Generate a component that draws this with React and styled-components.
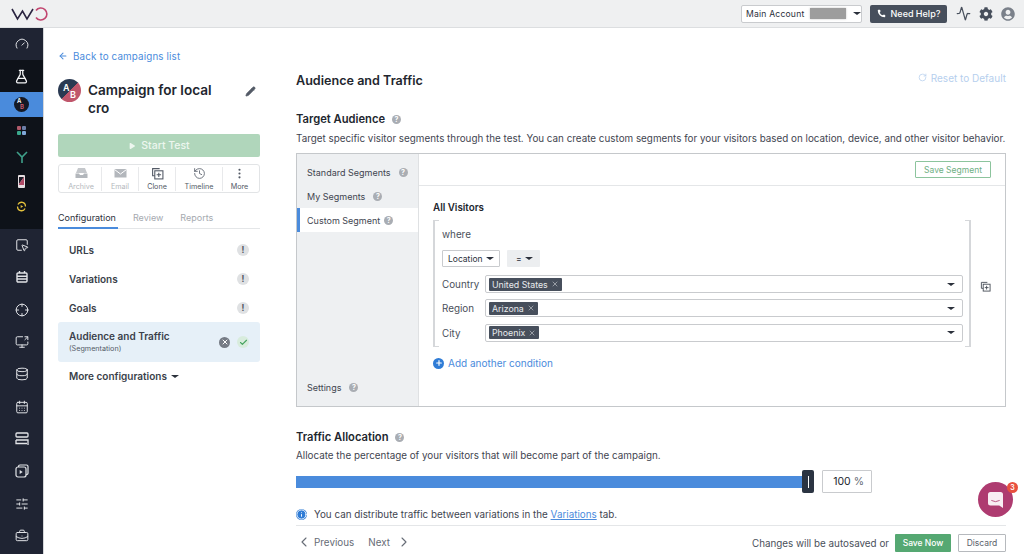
import React from "react";
import styled, { createGlobalStyle } from "styled-components";
import {
  ArrowLeft,
  BriefcaseBusiness,
  Check,
  ChevronLeft,
  ChevronRight,
  Crosshair,
  Database,
  Gauge,
  FlaskConical,
  History,
  EllipsisVertical,
  Activity,
  SlidersHorizontal,
  SquareMousePointer,
  CalendarDays,
  ScreenShare,
  RotateCw,
  Phone,
  Pencil,
  Play,
  Plus,
  X,
  Info,
} from "lucide-react";
import { FaCog, FaUserCircle } from "react-icons/fa";

const GlobalStyle = createGlobalStyle`
  html, body {
    margin: 0;
    padding: 0;
    height: 100%;
    overflow: hidden;
    background: #fff;
    font-family: Inter, "Liberation Sans", sans-serif;
    color: #2b303b;
  }
  * { box-sizing: border-box; }
`;

const Page = styled.div`
  width: 1024px;
  height: 554px;
  display: flex;
  flex-direction: column;
  overflow: hidden;
  position: relative;
`;

const TopBar = styled.header`
  height: 28px;
  flex-shrink: 0;
  display: flex;
  align-items: center;
  justify-content: space-between;
  padding: 0 9px 0 11px;
  background: #eff0f1;
  border-bottom: 1px solid #dcdee0;
`;

const TopRight = styled.div`
  display: flex;
  align-items: center;
`;

const AccountSelect = styled.div`
  width: 121px;
  height: 18px;
  display: flex;
  align-items: center;
  padding: 0 3px 0 4px;
  background: #fff;
  border: 1px solid #c9cbce;
  border-radius: 2px;
  font-size: 8.6px;
  letter-spacing: 0.2px;
  white-space: nowrap;
`;

const Blurred = styled.span`
  width: 36px;
  height: 11px;
  flex-shrink: 0;
  margin: 0 7px 0 6px;
  background: #9d9d9d;
  box-shadow: 0 0 2px #c4c4c4;
`;

const Caret = styled.span`
  display: inline-block;
  width: 0;
  height: 0;
  flex-shrink: 0;
  border-left: ${(p) => p.$size ?? 4}px solid transparent;
  border-right: ${(p) => p.$size ?? 4}px solid transparent;
  border-top: ${(p) => (p.$size ?? 4) - 1}px solid ${(p) => p.$color ?? "#2b303b"};
`;

const HelpButton = styled.div`
  width: 77px;
  height: 18px;
  margin-left: 8px;
  display: flex;
  align-items: center;
  justify-content: center;
  gap: 5px;
  background: #474f5c;
  border-radius: 2px;
  color: #fff;
  font-size: 9px;
  font-weight: 500;
`;

const TopIcons = styled.div`
  display: flex;
  align-items: center;
  gap: 8px;
  margin-left: 9px;
  color: #474f5c;
`;

const Body = styled.div`
  flex: 1;
  display: flex;
  min-height: 0;
`;

const SideNav = styled.nav`
  width: 44px;
  flex-shrink: 0;
  display: flex;
  flex-direction: column;
  background: #1f2433;
  border-right: 1px solid #d5d7da;
`;

const DarkGroup = styled.div`
  background: #0e1219;
  padding-bottom: 10px;
`;

const NavItem = styled.div`
  height: ${(p) => p.$h}px;
  display: flex;
  align-items: center;
  justify-content: center;
  color: ${(p) => p.$color ?? "#e2e4e8"};
  background: ${(p) => (p.$active ? "#4a8bdc" : "transparent")};
`;

const ABSmall = styled.div`
  width: 15px;
  height: 15px;
  border-radius: 50%;
  background: #141925;
  color: #fff;
  font-size: 6px;
  font-weight: 600;
  line-height: 6px;
  padding: 1px 0 0 3px;
  & span { color: #d0606f; margin-left: 3px; }
`;

const DotGrid = styled.div`
  display: grid;
  grid-template-columns: 4px 4px;
  gap: 1px;
`;

const Dot = styled.span`
  width: 4px;
  height: 4px;
  border-radius: 1px;
  background: ${(p) => p.$c};
`;

const LeftPanel = styled.aside`
  width: 252px;
  flex-shrink: 0;
  padding: 21px 36px 0 14px;
`;

const BackLink = styled.div`
  display: flex;
  align-items: center;
  gap: 5px;
  height: 14px;
  color: #4a8bdc;
  font-size: 9.8px;
  letter-spacing: 0.15px;
`;

const TitleRow = styled.div`
  display: flex;
  align-items: flex-start;
  margin-top: 15px;
  height: 44px;
`;

const Avatar = styled.div`
  width: 23px;
  height: 23px;
  margin-top: 1px;
  flex-shrink: 0;
  border-radius: 50%;
  position: relative;
  background: linear-gradient(135deg, #2a3a52 50%, #c0566b 50%);
  color: #fff;
  font-size: 9px;
  font-weight: 600;
`;

const AvatarLetter = styled.span`
  position: absolute;
  left: ${(p) => p.$x}px;
  top: ${(p) => p.$y}px;
  line-height: 1;
`;

const Title = styled.h1`
  flex: 1;
  margin: 3px 0 0 7px;
  font-size: 13.6px;
  line-height: 18px;
  font-weight: 600;
  color: #22262e;
`;

const EditIcon = styled.span`
  color: #535a66;
  margin: 3px 4px 0 0;
`;

const StartButton = styled.div`
  height: 23px;
  margin-top: 12px;
  display: flex;
  align-items: center;
  justify-content: center;
  gap: 5px;
  background: #b0d6bb;
  border-radius: 2px;
  color: #edf6ef;
  font-size: 10.5px;
  font-weight: 500;
`;

const ActionCard = styled.div`
  height: 29px;
  margin-top: 7px;
  display: flex;
  align-items: center;
  padding: 0 2px;
  border: 1px solid #e2e4e6;
  border-radius: 3px;
`;

const Action = styled.div`
  width: ${(p) => p.$w}px;
  height: 24px;
  display: flex;
  flex-direction: column;
  align-items: center;
  justify-content: space-between;
  font-size: 7.2px;
  color: ${(p) => (p.$off ? "#b3b7bc" : "#535a66")};
  border-right: ${(p) => (p.$last ? "none" : "1px solid #e8e9eb")};
`;

const Tabs = styled.div`
  margin-top: 18px;
  height: 18px;
  display: flex;
  gap: 15px;
  border-bottom: 1px solid #e4e6e8;
`;

const Tab = styled.div`
  height: 18px;
  font-size: 9px;
  line-height: 14px;
  margin-right: ${(p) => (p.$active ? "0" : "2px")};
  padding-right: ${(p) => (p.$active ? "2px" : "0")};
  color: ${(p) => (p.$active ? "#2b303b" : "#a5a9af")};
  border-bottom: ${(p) => (p.$active ? "2px solid #4a8bdc" : "none")};
`;

const ConfigList = styled.div`
  margin-top: 6px;
`;

const ConfigRow = styled.div`
  height: 29px;
  display: flex;
  align-items: center;
  justify-content: space-between;
  padding: 0 11px;
  font-size: 10px;
  font-weight: 600;
  color: #3a3f4a;
`;

const Bang = styled.span`
  width: 12px;
  height: 12px;
  border-radius: 50%;
  background: #dfe1e3;
  color: #4e545e;
  font-size: 8.5px;
  font-weight: 700;
  display: flex;
  align-items: center;
  justify-content: center;
`;

const ActiveRow = styled.div`
  height: 40px;
  display: flex;
  align-items: center;
  justify-content: space-between;
  padding: 0 11px;
  background: #e6f0f8;
  border-radius: 3px;
`;

const ActiveName = styled.div`
  font-size: 10px;
  font-weight: 600;
  line-height: 13px;
  color: #3a3f4a;
`;

const ActiveSub = styled.div`
  font-size: 7.2px;
  line-height: 11px;
  font-weight: 400;
  color: #535a66;
`;

const StatusIcons = styled.div`
  display: flex;
  align-items: center;
  gap: 7px;
`;

const RemoveDot = styled.span`
  width: 11px;
  height: 11px;
  border-radius: 50%;
  background: #757b85;
  color: #fff;
  display: flex;
  align-items: center;
  justify-content: center;
`;

const OkDot = styled.span`
  width: 12px;
  height: 12px;
  border-radius: 50%;
  background: #d8ecdd;
  color: #45a35f;
  display: flex;
  align-items: center;
  justify-content: center;
`;

const MoreRow = styled.div`
  height: 28px;
  display: flex;
  align-items: center;
  gap: 4px;
  padding-left: 11px;
  font-size: 10px;
  font-weight: 600;
  color: #3a3f4a;
`;

const Main = styled.main`
  flex: 1;
  min-width: 0;
  padding: 44px 18px 0 0;
  display: flex;
  flex-direction: column;
`;

const MainHeader = styled.div`
  display: flex;
  align-items: center;
  justify-content: space-between;
  height: 17px;
  flex-shrink: 0;
`;

const MainTitle = styled.h2`
  margin: 0;
  font-size: 12.6px;
  font-weight: 600;
  color: #22262e;
`;

const ResetLink = styled.div`
  display: flex;
  align-items: center;
  gap: 4px;
  margin-top: -6px;
  font-size: 10px;
  color: #b6cfee;
`;

const SectionTitle = styled.h3`
  margin: ${(p) => p.$top}px 0 0;
  display: flex;
  align-items: center;
  gap: 7px;
  height: 14px;
  flex-shrink: 0;
  font-size: 11.2px;
  font-weight: 600;
  color: #22262e;
`;

const Hint = styled.span`
  width: 9px;
  height: 9px;
  flex-shrink: 0;
  border-radius: 50%;
  background: #a9adb3;
  color: #fff;
  font-size: 7px;
  font-weight: 700;
  display: inline-flex;
  align-items: center;
  justify-content: center;
`;

const Description = styled.p`
  margin: ${(p) => p.$top ?? 5}px 0 0;
  flex-shrink: 0;
  font-size: 9.85px;
  line-height: 14px;
  color: #3f4550;
  white-space: nowrap;
`;

const SegmentPanel = styled.section`
  height: 254px;
  margin-top: 8px;
  flex-shrink: 0;
  display: flex;
  border: 1px solid #c5c8cb;
`;

const SegmentNav = styled.div`
  width: 122px;
  flex-shrink: 0;
  display: flex;
  flex-direction: column;
  padding-top: 6px;
  background: #eef0f2;
  border-right: 1px solid #dfe1e3;
`;

const SegmentTab = styled.div`
  height: 24px;
  flex-shrink: 0;
  display: flex;
  align-items: center;
  gap: ${(p) => p.$gap ?? 8}px;
  padding-left: ${(p) => (p.$active ? 7 : 10)}px;
  font-size: 9px;
  color: #3f4550;
  background: ${(p) => (p.$active ? "#fff" : "transparent")};
  border-left: ${(p) => (p.$active ? "3px solid #4a8bdc" : "none")};
  margin-top: ${(p) => (p.$bottom ? "auto" : "0")};
  margin-bottom: ${(p) => (p.$bottom ? "7px" : "0")};
`;

const SegmentBody = styled.div`
  flex: 1;
  min-width: 0;
`;

const SegmentHeader = styled.div`
  height: 32px;
  display: flex;
  align-items: center;
  justify-content: flex-end;
  padding-right: 14px;
  border-bottom: 1px solid #e4e6e8;
`;

const SaveSegment = styled.div`
  width: 76px;
  height: 17px;
  display: flex;
  align-items: center;
  justify-content: center;
  border: 1px solid #8cc49d;
  border-radius: 1px;
  font-size: 8.5px;
  color: #6fb084;
`;

const SegmentContent = styled.div`
  padding: 15px 0 0 14px;
`;

const AllVisitors = styled.div`
  font-size: 9.8px;
  font-weight: 600;
  line-height: 14px;
  color: #22262e;
`;

const ConditionRow = styled.div`
  display: flex;
  align-items: flex-start;
  margin-top: 5px;
`;

const Condition = styled.div`
  width: 538px;
  height: 127px;
  padding: 7px 6px 0 7px;
  border: 2px solid #d5d7da;
  border-top-width: 1px;
  border-bottom-width: 1px;
  position: relative;
  border-image: linear-gradient(
      to right,
      #d5d7da 0,
      #d5d7da 5px,
      transparent 5px,
      transparent calc(100% - 5px),
      #d5d7da calc(100% - 5px)
    )
    1;
`;

const Where = styled.div`
  font-size: 9.85px;
  line-height: 13px;
  color: #4a505a;
`;

const SelectRow = styled.div`
  display: flex;
  gap: 7px;
  margin-top: 9px;
  margin-bottom: 5px;
`;

const LocationSelect = styled.div`
  width: 58px;
  height: 17px;
  display: flex;
  align-items: center;
  justify-content: space-between;
  padding: 0 5px;
  border: 1px solid #c9cbce;
  border-radius: 1px;
  font-size: 8.5px;
`;

const OperatorSelect = styled.div`
  width: 33px;
  height: 17px;
  display: flex;
  align-items: center;
  justify-content: space-between;
  padding: 0 7px 0 9px;
  background: #eceef0;
  border-radius: 1px;
  font-size: 8.5px;
`;

const FieldRow = styled.div`
  height: 24.3px;
  display: flex;
  align-items: center;
  font-size: 9.85px;
  color: #4a505a;
`;

const FieldLabel = styled.span`
  width: 43px;
  flex-shrink: 0;
`;

const Field = styled.div`
  width: 478px;
  height: 18px;
  flex-shrink: 0;
  display: flex;
  align-items: center;
  justify-content: space-between;
  padding: 0 7px 0 3px;
  border: 1px solid #c9cbce;
  border-radius: 2px;
`;

const TagChip = styled.span`
  height: 13px;
  display: flex;
  align-items: center;
  gap: 3px;
  padding: 0 3px;
  background: #474f5c;
  border-radius: 1px;
  color: #e8eaed;
  font-size: 8.8px;
`;

const CopyButton = styled.span`
  margin: 56px 0 0 9px;
  color: #4a505a;
`;

const AddCondition = styled.div`
  display: flex;
  align-items: center;
  gap: 4px;
  margin-top: 10px;
  font-size: 10px;
  color: #4a8bdc;
`;

const PlusDot = styled.span`
  width: 11px;
  height: 11px;
  border-radius: 50%;
  background: #2f7cd6;
  color: #fff;
  display: flex;
  align-items: center;
  justify-content: center;
`;

const SliderRow = styled.div`
  height: 23px;
  margin-top: 8px;
  flex-shrink: 0;
  display: flex;
  align-items: center;
`;

const SliderTrack = styled.div`
  width: 506px;
  height: 12px;
  background: #4a8bdc;
`;

const SliderHandle = styled.div`
  width: 12px;
  height: 23px;
  display: flex;
  align-items: center;
  justify-content: center;
  background: #2b3442;
  border-radius: 2px;
  &::after {
    content: "";
    width: 1px;
    height: 12px;
    background: #fff;
  }
`;

const PercentBox = styled.div`
  width: 50px;
  height: 23px;
  margin-left: 8px;
  display: flex;
  align-items: center;
  justify-content: flex-end;
  gap: 3px;
  padding-right: 7px;
  border: 1px solid #c9cbce;
  border-radius: 1px;
  font-size: 10.5px;
  color: #22262e;
  & span { color: #666c76; }
`;

const InfoRow = styled.div`
  display: flex;
  align-items: center;
  gap: 7px;
  height: 14px;
  margin-top: 14px;
  flex-shrink: 0;
  font-size: 9.85px;
  color: #3f4550;
  & a { color: #4a8bdc; text-decoration: underline; }
`;

const InfoDot = styled.span`
  width: 11px;
  height: 11px;
  border-radius: 50%;
  background: #2f7cd6;
  color: #fff;
  display: flex;
  align-items: center;
  justify-content: center;
`;

const Footer = styled.footer`
  height: 34px;
  margin-top: 4px;
  flex-shrink: 0;
  display: flex;
  align-items: center;
  justify-content: space-between;
  border-top: 1px solid #e4e6e8;
`;

const Pager = styled.div`
  display: flex;
  align-items: center;
  margin-top: -2px;
  font-size: 9.85px;
  color: #666c76;
`;

const PagerLabel = styled.span`
  margin: ${(p) => p.$m};
`;

const FooterActions = styled.div`
  display: flex;
  align-items: center;
  font-size: 9.85px;
  color: #4a505a;
`;

const SaveNow = styled.div`
  width: 56px;
  height: 18px;
  margin-left: 6px;
  display: flex;
  align-items: center;
  justify-content: center;
  background: #55a872;
  border-radius: 1px;
  color: #fff;
  font-size: 8.5px;
  font-weight: 500;
`;

const Discard = styled.div`
  width: 48px;
  height: 18px;
  margin-left: 7px;
  display: flex;
  align-items: center;
  justify-content: center;
  border: 1px solid #b6b9bd;
  border-radius: 1px;
  font-size: 8.5px;
  color: #5c626c;
`;

const ChatBubble = styled.div`
  position: absolute;
  left: 978px;
  top: 482px;
  width: 35px;
  height: 35px;
  display: flex;
  align-items: center;
  justify-content: center;
  border-radius: 50%;
  background: #ae3b70;
`;

const ChatBadge = styled.span`
  position: absolute;
  right: -5px;
  top: 0;
  width: 11px;
  height: 11px;
  display: flex;
  align-items: center;
  justify-content: center;
  border-radius: 50%;
  background: #e8503f;
  color: #fff;
  font-size: 7px;
  font-weight: 600;
`;

function VwoLogo() {
  return (
    <svg width="38" height="14" viewBox="0 0 38 14" fill="none" strokeWidth="1.6">
      <path d="M1 2 L6.5 12 L11.5 4 L16 12 L22 2" stroke="#2a2440" />
      <path d="M25 3.5 A 6 6 0 1 1 25 10.5" stroke="#c2456f" />
    </svg>
  );
}

function YIcon() {
  return (
    <svg width="12" height="12" viewBox="0 0 12 12" fill="none" stroke="#3fa08a" strokeWidth="1.6">
      <path d="M1 1 L6 6 L11 1 M6 6 V12" />
    </svg>
  );
}

function PhoneIcon() {
  return (
    <svg width="7" height="13" viewBox="0 0 7 13">
      <rect x="0" y="0" width="7" height="13" rx="1" fill="#e6dfe2" />
      <path d="M1 2 H6 L1 9 Z" fill="#1b1b26" />
      <path d="M6 2 V10 H1 V9 Z" fill="#b04a66" />
    </svg>
  );
}

function CycleIcon() {
  return (
    <svg width="11" height="11" viewBox="0 0 14 14" fill="none" stroke="#e5c23c" strokeWidth="1.6">
      <path d="M2.5 4.5 A 5 5 0 0 1 12 7 M11.5 9.5 A 5 5 0 0 1 2 7" />
      <path d="M6 5 L9 7 L6 9 Z" fill="#e5c23c" stroke="none" />
    </svg>
  );
}

function BoardIcon() {
  return (
    <svg width="14" height="14" viewBox="0 0 14 14" fill="none" stroke="#e2e4e8" strokeWidth="1.4">
      <rect x="2" y="3" width="10" height="9" rx="1" />
      <path d="M2 6.2 H12 M2 9 H12 M4.5 1 V3 M9.5 1 V3" />
    </svg>
  );
}

function StackedRowsIcon() {
  return (
    <svg width="14" height="14" viewBox="0 0 14 14" fill="none" stroke="#e2e4e8" strokeWidth="1.3">
      <rect x="1" y="1" width="12" height="4" rx="1" />
      <path d="M1 8 H13 V13 M1 8 V11.5 H12" />
    </svg>
  );
}

function LayeredPlayIcon() {
  return (
    <svg width="14" height="14" viewBox="0 0 14 14" fill="none" stroke="#e2e4e8" strokeWidth="1.2">
      <rect x="1" y="3" width="10" height="10" rx="2" />
      <path d="M3.5 3 V2.5 A 1.5 1.5 0 0 1 5 1 H11.5 A 1.5 1.5 0 0 1 13 2.5 V9 A 1.5 1.5 0 0 1 11 10.5" />
      <path d="M4.7 6 L7.7 8 L4.7 10 Z" fill="#e2e4e8" stroke="none" />
    </svg>
  );
}

function CopyPlusIcon({ size = 11 }) {
  return (
    <svg width={size} height={size} viewBox="0 0 12 12" fill="none" stroke="currentColor" strokeWidth="1">
      <path d="M8 1.5 H1.5 V8 H3.5" />
      <rect x="3.5" y="3.5" width="7.5" height="7.5" />
      <path d="M7.2 5.2 V9.3 M5.2 7.2 H9.3" />
    </svg>
  );
}

function ArchiveTrayIcon() {
  return (
    <svg width="13" height="12" viewBox="0 0 13 12">
      <path d="M3 1 H10 L12 6 H1 Z" fill="#c4c7cb" />
      <path d="M0.5 6.5 H4 L5 8 H8 L9 6.5 H12.5 V11 H0.5 Z" fill="#b3b7bc" />
    </svg>
  );
}

function EnvelopeIcon() {
  return (
    <svg width="13" height="12" viewBox="0 0 13 12">
      <rect x="0.5" y="2" width="12" height="8.5" fill="#b3b7bc" />
      <path d="M0.5 2.5 L6.5 7 L12.5 2.5" stroke="#fff" fill="none" strokeWidth="1" />
    </svg>
  );
}

function ChatGlyph() {
  return (
    <svg width="15" height="18" viewBox="0 0 18 19">
      <path d="M3 0 H15 A 3 3 0 0 1 18 3 V19 L13.5 16 H3 A 3 3 0 0 1 0 13 V3 A 3 3 0 0 1 3 0 Z" fill="#f8edf3" />
      <path d="M4 10 Q 9 13 14 10" stroke="#ae3b70" strokeWidth="1" fill="none" />
    </svg>
  );
}

const navIcon = { size: 14, strokeWidth: 1.7 };

const lowerNav = [
  SquareMousePointer,
  BoardIcon,
  Crosshair,
  ScreenShare,
  Database,
  CalendarDays,
  StackedRowsIcon,
  LayeredPlayIcon,
  SlidersHorizontal,
  BriefcaseBusiness,
];

const fields = [
  { label: "Country", tag: "United States" },
  { label: "Region", tag: "Arizona" },
  { label: "City", tag: "Phoenix" },
];

const App = () => {
  return (
    <Page>
      <GlobalStyle />
      <TopBar>
        <VwoLogo />
        <TopRight>
          <AccountSelect>
            Main Account
            <Blurred />
            <Caret />
          </AccountSelect>
          <HelpButton>
            <Phone size={9} fill="#fff" strokeWidth={0} />
            Need Help?
          </HelpButton>
          <TopIcons>
            <Activity size={15} strokeWidth={2} />
            <FaCog size={14} />
            <FaUserCircle size={14} color="#7a808a" />
          </TopIcons>
        </TopRight>
      </TopBar>
      <Body>
        <SideNav>
          <NavItem $h={32}>
            <Gauge {...navIcon} />
          </NavItem>
          <DarkGroup>
            <NavItem $h={32}>
              <FlaskConical size={15} strokeWidth={2} color="#f2f3f5" />
            </NavItem>
            <NavItem $h={25} $active>
              <ABSmall>
                A<br />
                <span>B</span>
              </ABSmall>
            </NavItem>
            <NavItem $h={26}>
              <DotGrid>
                <Dot $c="#b05a6a" />
                <Dot $c="#6d7fa8" />
                <Dot $c="#3aa88c" />
                <Dot $c="#7fa8d8" />
              </DotGrid>
            </NavItem>
            <NavItem $h={27}>
              <YIcon />
            </NavItem>
            <NavItem $h={23}>
              <PhoneIcon />
            </NavItem>
            <NavItem $h={26}>
              <CycleIcon />
            </NavItem>
          </DarkGroup>
          {lowerNav.map((Icon, i) => (
            <NavItem key={i} $h={32.3}>
              <Icon {...navIcon} />
            </NavItem>
          ))}
        </SideNav>

        <LeftPanel>
          <BackLink>
            <ArrowLeft size={10} strokeWidth={2.5} />
            Back to campaigns list
          </BackLink>
          <TitleRow>
            <Avatar>
              <AvatarLetter $x={5} $y={4}>A</AvatarLetter>
              <AvatarLetter $x={12} $y={11}>B</AvatarLetter>
            </Avatar>
            <Title>
              Campaign for local
              <br />
              cro
            </Title>
            <EditIcon>
              <Pencil size={11} fill="#535a66" strokeWidth={1.5} />
            </EditIcon>
          </TitleRow>
          <StartButton>
            <Play size={8} fill="#edf6ef" strokeWidth={0} />
            Start Test
          </StartButton>
          <ActionCard>
            <Action $w={41} $off>
              <ArchiveTrayIcon />
              Archive
            </Action>
            <Action $w={37} $off>
              <EnvelopeIcon />
              Email
            </Action>
            <Action $w={37}>
              <CopyPlusIcon size={13} />
              Clone
            </Action>
            <Action $w={47}>
              <History size={13} strokeWidth={1.5} />
              Timeline
            </Action>
            <Action $w={33} $last>
              <EllipsisVertical size={13} strokeWidth={2} />
              More
            </Action>
          </ActionCard>
          <Tabs>
            <Tab $active>Configuration</Tab>
            <Tab>Review</Tab>
            <Tab>Reports</Tab>
          </Tabs>
          <ConfigList>
            {["URLs", "Variations", "Goals"].map((name) => (
              <ConfigRow key={name}>
                {name}
                <Bang>!</Bang>
              </ConfigRow>
            ))}
            <ActiveRow>
              <ActiveName>
                Audience and Traffic
                <ActiveSub>(Segmentation)</ActiveSub>
              </ActiveName>
              <StatusIcons>
                <RemoveDot>
                  <X size={8} strokeWidth={3} />
                </RemoveDot>
                <OkDot>
                  <Check size={9} strokeWidth={3} />
                </OkDot>
              </StatusIcons>
            </ActiveRow>
            <MoreRow>
              More configurations
              <Caret />
            </MoreRow>
          </ConfigList>
        </LeftPanel>

        <Main>
          <MainHeader>
            <MainTitle>Audience and Traffic</MainTitle>
            <ResetLink>
              <RotateCw size={9} strokeWidth={2} />
              Reset to Default
            </ResetLink>
          </MainHeader>
          <SectionTitle $top={23}>
            Target Audience
            <Hint>?</Hint>
          </SectionTitle>
          <Description>
            Target specific visitor segments through the test. You can create custom segments for your visitors based on location, device, and other visitor behavior.
          </Description>
          <SegmentPanel>
            <SegmentNav>
              <SegmentTab>
                Standard Segments
                <Hint>?</Hint>
              </SegmentTab>
              <SegmentTab>
                My Segments
                <Hint>?</Hint>
              </SegmentTab>
              <SegmentTab $active $gap={4}>
                Custom Segment
                <Hint>?</Hint>
              </SegmentTab>
              <SegmentTab $bottom>
                Settings
                <Hint>?</Hint>
              </SegmentTab>
            </SegmentNav>
            <SegmentBody>
              <SegmentHeader>
                <SaveSegment>Save Segment</SaveSegment>
              </SegmentHeader>
              <SegmentContent>
                <AllVisitors>All Visitors</AllVisitors>
                <ConditionRow>
                  <Condition>
                    <Where>where</Where>
                    <SelectRow>
                      <LocationSelect>
                        Location
                        <Caret />
                      </LocationSelect>
                      <OperatorSelect>
                        =
                        <Caret />
                      </OperatorSelect>
                    </SelectRow>
                    {fields.map((f) => (
                      <FieldRow key={f.label}>
                        <FieldLabel>{f.label}</FieldLabel>
                        <Field>
                          <TagChip>
                            {f.tag}
                            <X size={8} strokeWidth={1.5} />
                          </TagChip>
                          <Caret />
                        </Field>
                      </FieldRow>
                    ))}
                  </Condition>
                  <CopyButton>
                    <CopyPlusIcon />
                  </CopyButton>
                </ConditionRow>
                <AddCondition>
                  <PlusDot>
                    <Plus size={8} strokeWidth={3.5} />
                  </PlusDot>
                  Add another condition
                </AddCondition>
              </SegmentContent>
            </SegmentBody>
          </SegmentPanel>
          <SectionTitle $top={23}>
            Traffic Allocation
            <Hint>?</Hint>
          </SectionTitle>
          <Description $top={4}>Allocate the percentage of your visitors that will become part of the campaign.</Description>
          <SliderRow>
            <SliderTrack />
            <SliderHandle />
            <PercentBox>
              100 <span>%</span>
            </PercentBox>
          </SliderRow>
          <InfoRow>
            <InfoDot>
              <Info size={11} color="#fff" fill="#2f7cd6" strokeWidth={2} />
            </InfoDot>
            <span>
              You can distribute traffic between variations in the <a>Variations</a> tab.
            </span>
          </InfoRow>
          <Footer>
            <Pager>
              <ChevronLeft size={16} strokeWidth={1.6} />
              <PagerLabel $m="0 14px 0 2px">Previous</PagerLabel>
              <PagerLabel $m="0 6px 0 0">Next</PagerLabel>
              <ChevronRight size={16} strokeWidth={1.6} />
            </Pager>
            <FooterActions>
              Changes will be autosaved or
              <SaveNow>Save Now</SaveNow>
              <Discard>Discard</Discard>
            </FooterActions>
          </Footer>
        </Main>
      </Body>
      <ChatBubble>
        <ChatGlyph />
        <ChatBadge>3</ChatBadge>
      </ChatBubble>
    </Page>
  );
};

export default App;
